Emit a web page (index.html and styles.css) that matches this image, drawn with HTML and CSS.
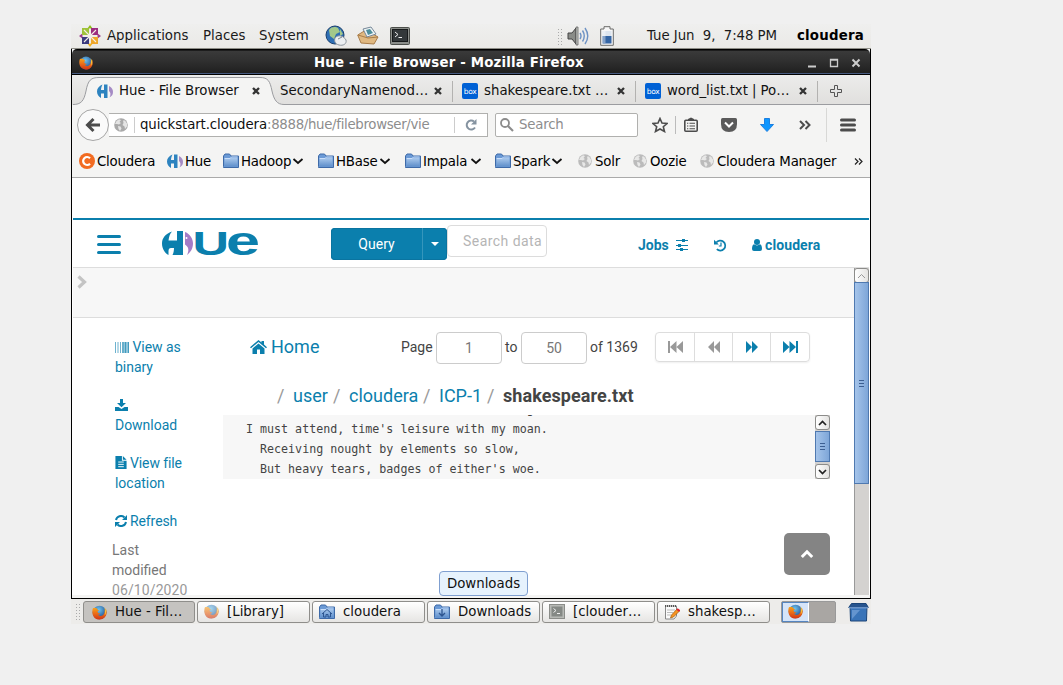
FILE: index.html
```html
<!DOCTYPE html>
<html lang="en">
<head>
<meta charset="utf-8">
<title>Hue - File Browser</title>
<link rel="stylesheet" href="styles.css">
</head>
<body>
<svg class="defs" width="0" height="0">
  <defs>
    <linearGradient id="gf" x1="0" y1="0" x2="0" y2="1"><stop offset="0" stop-color="#a9c8ec"/><stop offset="1" stop-color="#5f8fcb"/></linearGradient>
    <radialGradient id="gb" cx=".45" cy=".3" r=".7"><stop offset="0" stop-color="#6fc4ee"/><stop offset="1" stop-color="#173f86"/></radialGradient>
    <linearGradient id="go" x1="0" y1="0" x2="0" y2="1"><stop offset="0" stop-color="#f5a21c"/><stop offset=".5" stop-color="#ea6a18"/><stop offset="1" stop-color="#cf3417"/></linearGradient>
    <symbol id="firefox" viewBox="0 0 16 16">
      <circle cx="8" cy="8" r="7.3" fill="url(#gb)"/>
      <path d="M1 3.500C0 6 0 10 2 12.700C4 15.500 8.500 16.600 12 14.500C16 12 16.700 7 14.500 3.500C14.300 5 14 5.500 13.500 6C13.800 8.500 12.500 11.500 9.500 11.600C8 11.600 7 11 6.500 10C7.500 10.200 8.500 9.800 8.700 9C7 9 5.800 8 6 6.600C6.500 6.300 7.200 6.500 7.400 5.800C6.500 5 5.500 4.500 5 3.500C3.500 3 2 3 1 3.500Z" fill="url(#go)"/>
      <path d="M13 2.500C15.300 5 15.500 9 13.500 11.500C14.200 8 14 5 13 2.500Z" fill="#fccf3a"/>
    </symbol>
    <symbol id="huemark" viewBox="0 0 31 24">
      <path d="M10 .5C3 3 0 7.500 0 12.500C0 18 3 22 6.500 24V20Q6.500 17 9 17H15V24H21V0H15V9.500H6.500C7 5.500 8 2.500 10 .5Z" fill="#0b7fad"/>
      <path d="M10.500 24C11.500 22 12 19.500 12 17H15V24Z" fill="#0b7fad"/>
      <path d="M23 1C28 3 31 7.500 31 12.500C31 17.500 28.500 21.500 25 24C27.500 19 26.500 16 23 13.500Z" fill="#a47cc7"/>
      <circle cx="24.500" cy="7" r="1" fill="#fff"/>
    </symbol>
    <symbol id="huefav" viewBox="0 0 16 16">
      <path d="M5.500 1.500C2 3 0 5.500 0 8.500C0 11.500 1.500 13.500 4 15V10.500H7V15H10.500V1.500H7V7H4C4.200 4.500 4.700 3 5.500 1.500Z" fill="#2d83bf"/>
      <path d="M12 3C15 4.500 16 6.500 16 9C16 11.500 15 13 12.500 14.500C14 11.500 13.700 9.500 12 8Z" fill="#a58bc5"/>
    </symbol>
    <symbol id="folder" viewBox="0 0 16 16">
      <path d="M.5 13.500V3L2 1H6.500L8 3H15.500V14.500H.5Z" fill="#6b9ad6" stroke="#3e6aa8"/>
      <path d="M1.500 13.500V6.500L3 5H14.500V13.500Z" fill="url(#gf)"/><path d="M1.500 5.500H7L8.500 4H14.500" fill="none" stroke="#c9defa"/>
    </symbol>
    <symbol id="globe" viewBox="0 0 14 14">
      <circle cx="7" cy="7" r="6.800" fill="#a9a9a9"/>
      <path d="M1 6L2.500 3L5 1.200L7 2L5.500 4L7 5L5 6.500L3 6ZM4 8L6.500 8.500L7.500 10.500L6 13L4.500 11ZM9 2.500L11 2.500L13 5.500L13 8.500L11 11L10.500 8.500L8.500 7L9.500 5Z" fill="#e4e4e4"/>
    </symbol>
    <symbol id="close" viewBox="0 0 10 10"><path d="M2 2L8 8M8 2L2 8" stroke="#333" stroke-width="2.300"/></symbol>
    <symbol id="chev" viewBox="0 0 12 12"><path d="M1.500 4L6 8L10.500 4" fill="none" stroke="#111" stroke-width="1.800"/></symbol>
    <symbol id="boxfav" viewBox="0 0 16 16"><rect width="16" height="16" rx="2" fill="#0061d5"/><text x="8" y="10.800" text-anchor="middle" font-family="DejaVu Sans" font-size="7.500" letter-spacing="-.4" fill="#fff">box</text></symbol>
  </defs>
</svg>
<main class="desktop">
  <header class="panel">
    <svg width="22" height="22" viewBox="0 0 22 22">
      <path d="M22 11L18 14V8ZM0 11L4 8V14Z" fill="#9b3f8c"/><path d="M11 0L14 4H8Z" fill="#8fbc1c"/><path d="M11 22L8 18H14Z" fill="#f0b020"/>
      <path d="M3 3H10V10H3Z" fill="#9fc23a"/><path d="M12 3H19V10H12Z" fill="#9c2d80"/><path d="M3 12H10V19H3Z" fill="#3b3a7d"/><path d="M12 12H19V19H12Z" fill="#efa72b"/>
      <path d="M5 5L17 17M17 5L5 17M11 3V19M3 11H19" stroke="#f3eee6" stroke-width="1.100"/>
    </svg>
    <span>Applications</span><span>Places</span><span>System</span>
    <svg width="22" height="22" viewBox="0 0 22 22"><circle cx="10" cy="10" r="9" fill="#2f6fb4" stroke="#193f6d"/><path d="M4 5C7 1 11 2 13 3L15 7L11 9L9 14L5 11ZM15 4L18 9L15 11Z" fill="#a3c88a"/><path d="M10 13C13 9 19 11 21 15C22 19 18 21 14 20C10 19 9 16 10 13Z" fill="#eceff1" stroke="#8b949c"/><path d="M13 14L17 12" stroke="#7d8890"/></svg>
    <svg width="22" height="22" viewBox="0 0 22 22"><path d="M.7 10L9 5L21 12L17 19L4 18Z" fill="#e0b981" stroke="#a97d4a"/><path d="M6 4L14 2L19 9L10 12Z" fill="#edf3f4" stroke="#789"/><path d="M9 5L13 4L16 8L11 10Z" fill="#4d8e9c"/><path d="M1 10L11 13L21 12" fill="none" stroke="#a97d4a"/></svg>
    <svg width="20" height="18" viewBox="0 0 20 18"><rect x=".5" y=".5" width="19" height="17" rx="1" fill="#8b8e8a" stroke="#4b4e4a"/><rect x="2.500" y="2.500" width="15" height="12" fill="#33383a" stroke="#171a1b"/><path d="M5 5L8 7.500L5 10M8.500 10.500H12" fill="none" stroke="#eee"/></svg>
    <i class="grip"></i>
    <svg width="22" height="20" viewBox="0 0 22 20"><path d="M1 7H5L9 2V18L5 13H1Z" fill="#8a8c88" stroke="#444"/><path d="M9 1H11V19H9Z" fill="#c7c9c5" stroke="#555" stroke-width=".7"/><path d="M13 7Q15 10 13 13M15.500 4.500Q19 10 15.500 15.500M18 2Q23.500 10 18 18" fill="none" stroke="#6d92c4" stroke-width="1.400"/></svg>
    <svg width="14" height="20" viewBox="0 0 14 20"><path d="M4 3V.7H10V3H13.300V19.300H.7V3Z" fill="#f7f7f7" stroke="#6a6b69"/><rect x="2.500" y="5" width="9" height="5" fill="#dce4ee"/><rect x="2.500" y="10" width="9" height="7.500" fill="#3465a4"/><rect x="2.500" y="5" width="3" height="12" fill="#fff" opacity=".4"/></svg>
    <span class="date">Tue Jun&nbsp; 9,&nbsp; 7:48 PM</span><b>cloudera</b>
  </header>

  <section class="window">
    <div class="titlebar">
      <svg width="14" height="14"><use href="#firefox"/></svg>
      <b>Hue - File Browser - Mozilla Firefox</b>
      <svg width="54" height="12" viewBox="0 0 54 12" fill="none" stroke="#ccc"><path d="M1 9.500H9" stroke-width="2"/><path d="M23.500 2.500H30.500V9.500H23.500Z M23 3H31" stroke-width="1.300"/><path d="M45.500 2.500L52.500 9.500M52.500 2.500L45.500 9.500" stroke-width="2"/></svg>
    </div>
    <div class="tabs">
      <svg class="tabshape" width="797" height="30" viewBox="0 0 797 30"><path d="M0 30V29.500C8 29.500 11 26 13 16C15 5 18 2.500 26 2.500H187C195 2.500 197 6 199 16C201 25 204 29.500 211 29.500V30Z" fill="#f4f4f3"/><path d="M0 29.500C8 29.500 11 26 13 16C15 5 18 2.500 26 2.500H187C195 2.500 197 6 199 16C201 25 204 29.500 211 29.500H797" fill="none" stroke="#9b9ca0"/></svg>
      <div class="tabrow">
        <svg width="16" height="16"><use href="#huefav"/></svg><span class="s1">Hue - File Browser</span><svg width="10" height="10"><use href="#close"/></svg>
        <span class="s2">SecondaryNamenod…</span><svg width="10" height="10"><use href="#close"/></svg><i></i>
        <svg width="16" height="16"><use href="#boxfav"/></svg><span class="s3">shakespeare.txt …</span><svg width="10" height="10"><use href="#close"/></svg><i></i>
        <svg width="16" height="16"><use href="#boxfav"/></svg><span class="s4">word_list.txt | Po…</span><svg width="10" height="10"><use href="#close"/></svg><i></i>
        <svg class="plus" width="12" height="12" viewBox="0 0 12 12"><path d="M4.500.5H7.500V4.500H11.500V7.500H7.500V11.500H4.500V7.500H.5V4.500H4.500Z" fill="#e6e6e5" stroke="#555"/></svg>
      </div>
    </div>
    <div class="nav">
      <div class="back"><svg width="16" height="16" viewBox="0 0 16 16"><path d="M8.500 2L2.500 8L8.500 14M3 8H15" fill="none" stroke="#4b4b4b" stroke-width="3"/></svg></div>
      <div class="url">
        <svg width="14" height="14"><use href="#globe"/></svg><i></i><span>quickstart.cloudera<em>:8888/hue/filebrowser/vie</em></span><i></i>
        <svg width="12" height="12" viewBox="0 0 12 12"><path d="M10 8.500A4.500 4.500 0 1 1 9 2.500" fill="none" stroke="#8593a0" stroke-width="2"/><path d="M11.500 0V5.500H6Z" fill="#8593a0"/></svg>
      </div>
      <div class="find"><svg width="14" height="14" viewBox="0 0 14 14"><circle cx="5" cy="5" r="4" fill="none" stroke="#8c8c8c" stroke-width="1.800"/><path d="M8 8L13 13" stroke="#8c8c8c" stroke-width="2.200"/></svg><span>Search</span></div>
      <div class="tools">
        <svg width="16" height="16" viewBox="0 0 16 16"><path d="M8 1.500L10 6L15 6.500L11.300 9.700L12.500 14.500L8 12L3.500 14.500L4.700 9.700L1 6.500L6 6Z" fill="none" stroke="#4c4c4c" stroke-width="1.600"/></svg>
        <i></i>
        <svg width="14" height="16" viewBox="0 0 14 16"><rect x=".8" y="3.300" width="12.400" height="10.900" rx="1" fill="none" stroke="#4c4c4c" stroke-width="1.600"/><path d="M4 3.500V2L7 .5L10 2V3.500Z" fill="#4c4c4c"/><path d="M3 6.300H4.300M5.500 6.300H11M3 9H4.300M5.500 9H11M3 11.700H4.300M5.500 11.700H11" stroke="#4c4c4c" stroke-width="1.100"/></svg>
        <svg width="16" height="14" viewBox="0 0 16 14"><path d="M1.500 0H14.500Q16 0 16 1.500V6Q16 14 8 14Q0 14 0 6V1.500Q0 0 1.500 0Z" fill="#5a5a5a"/><path d="M4 4.500L8 8.500L12 4.500" fill="none" stroke="#fff" stroke-width="2"/></svg>
        <svg width="14" height="14" viewBox="0 0 14 14"><path d="M4.500.5H9.500V6.500H13.500L7 13.500L.5 6.500H4.500Z" fill="#0d96ff" stroke="#1b7fe0"/></svg>
        <svg width="12" height="10" viewBox="0 0 12 10"><path d="M1 1L5 5L1 9M6.500 1L10.500 5L6.500 9" fill="none" stroke="#4c4c4c" stroke-width="2"/></svg>
        <i class="tall"></i>
        <svg width="16" height="14" viewBox="0 0 16 14"><path d="M1.500 2H14.500M1.500 7H14.500M1.500 12H14.500" stroke="#4c4c4c" stroke-width="3" stroke-linecap="round"/></svg>
      </div>
    </div>
    <div class="marks">
      <svg width="16" height="16" viewBox="0 0 16 16"><circle cx="8" cy="8" r="8" fill="#f26b21"/><path d="M11 5.200A4 4 0 1 0 11 10.800" fill="none" stroke="#fff" stroke-width="2.200"/></svg><span>Cloudera</span>
      <svg width="16" height="16"><use href="#huefav"/></svg><span>Hue</span>
      <svg width="16" height="16"><use href="#folder"/></svg><span>Hadoop</span><svg width="12" height="12"><use href="#chev"/></svg>
      <svg width="16" height="16"><use href="#folder"/></svg><span>HBase</span><svg width="12" height="12"><use href="#chev"/></svg>
      <svg width="16" height="16"><use href="#folder"/></svg><span>Impala</span><svg width="12" height="12"><use href="#chev"/></svg>
      <svg width="16" height="16"><use href="#folder"/></svg><span>Spark</span><svg width="12" height="12"><use href="#chev"/></svg>
      <svg width="14" height="14" opacity=".75"><use href="#globe"/></svg><span>Solr</span>
      <svg width="14" height="14" opacity=".75"><use href="#globe"/></svg><span>Oozie</span>
      <svg width="14" height="14" opacity=".75"><use href="#globe"/></svg><span class="cm">Cloudera Manager</span>
      <svg width="9" height="7" viewBox="0 0 9 7"><path d="M1 .5L4 3.500L1 6.500M5 .5L8 3.500L5 6.500" fill="none" stroke="#222" stroke-width="1.200"/></svg>
    </div>

    <div class="page">
      <div class="hue">
        <svg width="24" height="20" viewBox="0 0 24 20"><path d="M1.500 1.500H22.500M1.500 9.500H22.500M1.500 17.500H22.500" stroke="#0b7fad" stroke-width="3" stroke-linecap="round"/></svg>
        <svg class="logo" width="98" height="26" viewBox="0 0 98 26"><use href="#huemark" width="31" height="24" y="1"/><g fill="#0b7fad" font-family="Liberation Sans" font-weight="bold"><text x="30.500" y="24.600" font-size="32.500" textLength="36.500" lengthAdjust="spacingAndGlyphs">U</text><text x="64" y="24.500" font-size="40.500" textLength="34" lengthAdjust="spacingAndGlyphs">e</text></g></svg>
        <div class="query"><span>Query</span><i><svg width="8" height="4" viewBox="0 0 8 4"><path d="M0 0H8L4 4Z" fill="#fff"/></svg></i></div>
        <div class="sdata">Search data</div>
        <b>Jobs</b>
        <svg width="13" height="12" viewBox="0 0 13 12"><path d="M0 1.500H12M0 6.500H12M0 10.500H12" stroke="#0b7fad"/><path d="M6 0H9V3H6ZM2 5H5V8H2ZM4 9H7V12H4Z" fill="#0b7fad"/></svg>
        <svg width="13" height="13" viewBox="0 0 13 13"><path d="M2.300 3.500A5 5 0 1 1 2.800 10.200" fill="none" stroke="#0b7fad" stroke-width="1.700"/><path d="M0 .8V5.500H4.800Z" fill="#0b7fad"/><path d="M7 3.500V7H4.800" fill="none" stroke="#0b7fad" stroke-width="1.200"/></svg>
        <svg width="10" height="12" viewBox="0 0 10 12"><circle cx="5" cy="3" r="3" fill="#0b7fad"/><path d="M2 5.300Q5 7.500 8 5.300Q10 6 10 10Q10 12 8 12H2Q0 12 0 10Q0 6 2 5.300Z" fill="#0b7fad"/></svg>
        <b class="who">cloudera</b>
      </div>
      <div class="body">
        <div class="view">
          <div class="strip"><svg width="10" height="14" viewBox="0 0 10 14"><path d="M1.500 1.500L7.500 7L1.500 12.500" fill="none" stroke="#c4c4c4" stroke-width="3.200"/></svg></div>
          <div class="cols">
            <nav class="side">
              <a><svg width="14" height="11" viewBox="0 0 14 11"><path d="M7 0h7v11h-7z" fill="#0b7fad" opacity=".45"/><path d="M.5 0V11M3 0V11M5.500 0V11M8 0V11M10.500 0V11M13.500 0V11" stroke="#0b7fad" stroke-width=".8" opacity=".75"/></svg> View as<br>binary</a>
              <a><svg width="13" height="12" viewBox="0 0 13 12"><path d="M5 0H8V4H11L6.500 8.300L2 4H5Z M0 8H3.500L6.500 10L9.500 8H13V12H0Z" fill="#0b7fad"/></svg><br>Download</a>
              <a><svg width="12" height="13" viewBox="0 0 12 14"><path d="M0 0H7V5H12V14H0ZM8 0L12 4H8Z" fill="#0b7fad"/><path d="M3 6.500H9M3 9H9M3 11.500H9" stroke="#fff"/></svg><span class="n">View file</span><br>location</a>
              <a><svg width="12" height="12" viewBox="0 0 12 12"><path d="M1 5A5 5 0 0 1 9.500 2.500M11 7A5 5 0 0 1 2.500 9.500" fill="none" stroke="#0b7fad" stroke-width="2"/><path d="M12 0V5H7ZM0 12V7H5Z" fill="#0b7fad"/></svg><span class="n">Refresh</span></a>
              <p>Last<br>modified<br><em>06/10/2020</em></p>
            </nav>
            <section class="file">
              <div class="pager">
                <svg width="17" height="14" viewBox="0 0 17 14"><path d="M0 7.200L8.500 0L11.500 2.500V1H14V4.600L17 7.200L16 8.300L8.500 2L1 8.300Z M2.500 8.500L8.500 3.400L14.500 8.500V14H10V9.500H7V14H2.500Z" fill="#0b7fad"/></svg>
                <a>Home</a><span>Page</span><div class="box">1</div><span>to</span><div class="box">50</div><span>of 1369</span>
                <div class="btns">
                  <i><svg width="15" height="12" viewBox="0 0 15 12"><path d="M0 0H2V12H0ZM8.500 0V12L2 6ZM15 0V12L8.500 6Z" fill="#999"/></svg></i>
                  <i><svg width="12" height="12" viewBox="0 0 12 12"><path d="M6 0V12L0 6ZM12 0V12L6 6Z" fill="#999"/></svg></i>
                  <i><svg width="12" height="12" viewBox="0 0 12 12"><path d="M0 0V12L6 6ZM6 0V12L12 6Z" fill="#0b7fad"/></svg></i>
                  <i><svg width="15" height="12" viewBox="0 0 15 12"><path d="M0 0V12L6.500 6ZM6.500 0V12L13 6ZM13 0H15V12H13Z" fill="#0b7fad"/></svg></i>
                </div>
              </div>
              <div class="crumbs"><u>/</u><a>user</a><u>/</u><a>cloudera</a><u>/</u><a>ICP-1</a><u>/</u><b>shakespeare.txt</b></div>
              <div class="text">
<pre>But that so much of earth and water wrought,
I must attend, time's leisure with my moan.
  Receiving nought by elements so slow,
  But heavy tears, badges of either's woe.</pre>
                <div class="sb inner"><i class="btn"><svg width="9" height="6" viewBox="0 0 9 6"><path d="M1 5L4.500 1.500L8 5" fill="none" stroke="#222" stroke-width="1.700"/></svg></i><i class="thumb"><s></s></i><i class="btn low"><svg width="9" height="6" viewBox="0 0 9 6"><path d="M1 1L4.500 4.500L8 1" fill="none" stroke="#222" stroke-width="1.700"/></svg></i></div>
              </div>
              <div class="top"><svg width="14" height="10" viewBox="0 0 14 10"><path d="M1.800 8L7 2.800L12.200 8" fill="none" stroke="#fff" stroke-width="3"/></svg></div>
            </section>
          </div>
        </div>
        <div class="sb outer"><i class="btn"><svg width="9" height="6" viewBox="0 0 9 6"><path d="M1 5L4.500 1.500L8 5" fill="none" stroke="#999"/></svg></i><i class="thumb"><s></s></i></div>
      </div>
    </div>
  </section>

  <footer class="taskbar">
    <i class="grip"></i>
    <div class="task on"><svg width="15" height="15"><use href="#firefox"/></svg><span>Hue - Fil…</span></div>
    <div class="task"><svg width="15" height="15" opacity=".6"><use href="#firefox"/></svg><span>[Library]</span></div>
    <div class="task"><svg width="16" height="16"><use href="#folder"/><path d="M3 10L8 5.500L13 10M4.500 9V13H7V10.500H9V13H11.500V9" fill="none" stroke="#2d5590"/></svg><span>cloudera</span></div>
    <div class="task"><svg width="16" height="16"><use href="#folder"/><path d="M8 5V12M5 9L8 12L11 9" fill="none" stroke="#2d5590" stroke-width="1.300"/></svg><span>Downloads</span><div class="tip">Downloads</div></div>
    <div class="task"><svg width="16" height="15" viewBox="0 0 16 15"><rect x=".5" y=".5" width="15" height="14" fill="#b8bab6" stroke="#8b8d89"/><rect x="2.500" y="2.500" width="11" height="10" fill="#858985"/><path d="M4.500 4.500L7 6.500L4.500 8.500M8 9.500H11" fill="none" stroke="#eee"/></svg><span>[clouder…</span></div>
    <div class="task"><svg width="16" height="16" viewBox="0 0 16 16"><path d="M1.500 2H12.500V12L10 15H1.500Z" fill="#fafafa" stroke="#888"/><path d="M1 2H13" stroke="#555" stroke-width="2" stroke-dasharray="1 1"/><path d="M3 6H11M3 8.500H9M3 11H7" stroke="#bbb"/><path d="M6.500 14L7.500 11L13 5L15.500 7L9.500 13Z" fill="#f79321" stroke="#9c5a10" stroke-width=".7"/><path d="M13 5L15.500 7" stroke="#d23" stroke-width="2"/></svg><span>shakesp…</span></div>
    <div class="spaces"><i><svg width="15" height="15"><use href="#firefox"/></svg></i></div>
    <svg width="21" height="20" viewBox="0 0 21 20"><path d="M2 4L2.500 19H18.500L19 4Z" fill="#3a74b8" stroke="#1c4578"/><path d="M3.500 1.500H18L20.300 5.500H.7Z" fill="#27548e" stroke="#1c4578"/><path d="M1 5.800H20" stroke="#8fb6e6"/><path d="M4 8V17L12 8Z" fill="#8fb6e6" opacity=".5"/></svg>
  </footer>
</main>
</body>
</html>
```
FILE: styles.css
```css
* { box-sizing: border-box; }
body { margin: 0; padding: 24px 0 0 71px; height: 685px; overflow: hidden; background: #f0f0f0; font: 13.333px/16px "DejaVu Sans", sans-serif; color: #111; white-space: nowrap; }
svg { display: block; flex: none; }
i, em { font-style: normal; }
.defs { position: absolute; }
.desktop { width: 800px; height: 600px; display: flex; flex-direction: column; background: #edecea; }

.panel { height: 25px; display: grid; grid-template-columns: 28px 96px 56px 66px 32px 33px 167px 10px 33px 47px 150px 74px; padding-left: 8px; align-items: center; border-bottom: 1px solid #8d8d86; background: linear-gradient(#efefee, #eae9e6); }
.panel > span, .panel > b { color: #1a1a1a; }
.panel > b { letter-spacing: .2px; color: #000; }
.panel .date { letter-spacing: -.06px; }
.grip { width: 5px; height: 17px; background: radial-gradient(circle, #aaa 30%, transparent 40%) 0 0 / 3px 3px; }

.window { height: 550px; border: 1px solid #000; border-top: 0; background: #f4f4f3; display: flex; flex-direction: column; }
.titlebar { height: 26px; flex: none; display: grid; grid-template-columns: 235px 493px 60px; padding-left: 7px; align-items: center; background: linear-gradient(#000 1px, #3a3a3a 2px, #2f2f2f 50%, #202020 94%); border-bottom: 1px solid #000; box-shadow: inset 0 -1px #465a80; border-radius: 5px 5px 0 0; color: #fff; }
.titlebar > svg { margin-top: 2px; }
.titlebar b { letter-spacing: .18px; margin-top: 2px; }

.tabs { height: 30px; flex: none; display: grid; padding-left: 1px; background: linear-gradient(#ececeb, #e0dfdd); }
.tabshape, .tabrow { grid-area: 1 / 1; }
.tabrow { display: grid; grid-template-columns: 22px 132px 29px 153px 19px 10px 22px 132px 19px 10px 22px 131px 19px 13px 40px; padding: 2px 0 0 24px; align-items: center; z-index: 1; }
.tabrow i { width: 1px; height: 21px; background: #b3b2b0; }
.s1 { letter-spacing: -.04px; }
.s4 { letter-spacing: -.06px; }

.nav { height: 39px; flex: none; display: flex; align-items: center; padding-left: 5px; }
.back { width: 32px; height: 32px; border: 1px solid #a6a6a6; border-radius: 50%; background: #fafafa; display: flex; align-items: center; justify-content: center; z-index: 1; }
.url { width: 379px; height: 24px; border: 1px solid #b0b0ae; border-left: 0; background: #fff; display: grid; grid-template-columns: 20px 6px 314px 11px 20px; align-items: center; padding-left: 5px; }
.url i { width: 1px; height: 16px; background: #ccc; }
.url span { margin-top: 1px; letter-spacing: -.1px; }
.url em { color: #8d8d8d; letter-spacing: -.32px; }
.find { width: 143px; height: 24px; margin-left: 7px; border: 1px solid #b0b0ae; border-radius: 2px; background: #fff; display: flex; align-items: center; gap: 5px; padding-left: 4px; color: #8d8d8d; }
.find span { margin-top: 1px; letter-spacing: -.2px; }
.tools { display: grid; grid-template-columns: 23px 9px 37px 39px 39px 27px 14px 20px; align-items: center; padding-left: 14px; }
.tools i { width: 1px; height: 18px; background: #bbb; }
.tools .tall { height: 34px; background: #d8d8d6; }

.marks { height: 34px; flex: none; display: grid; grid-template-columns: 18px 70px 18px 38px 18px 51px 26px 18px 43px 26px 18px 47px 25px 18px 38px 27px 17px 38px 17px 50px 17px 137px 14px; align-items: center; padding: 1px 0 0 7px; border-bottom: 1px solid #aaa; color: #000; letter-spacing: -.2px; }
.marks span { margin-top: 1px; }
.marks .cm { letter-spacing: -.2px; }

.page { flex: none; height: 417px; padding: 40px 1px 0; background: #fff; font-family: Roboto, sans-serif; font-size: 14px; line-height: 20px; color: #444; display: flex; flex-direction: column; }
.hue { height: 50px; flex: none; display: grid; grid-template-columns: 65px 169px 116px 191px 38px 38px 38px 13px 60px; border-top: 2px solid #0b7fad; border-bottom: 1px solid #ddd; padding: 0 0 0 24px; align-items: center; color: #0b7fad; }
.hue > svg, .hue > b { margin-top: 3px; }
.hue > .logo { margin-top: -1px; overflow: visible; }
.who { letter-spacing: .1px; }
.query { height: 32px; display: flex; background: #0b7fad; border-radius: 4px; color: #fff; line-height: 32px; box-shadow: inset 0 0 0 1px #0a74a0; }
.query span { width: 91px; text-align: center; }
.query i { width: 25px; border-left: 1px solid #3596bc; display: flex; align-items: center; justify-content: center; }
.sdata { width: 100px; height: 32px; margin-top: -5px; border: 1px solid #dcdcdc; border-radius: 4px; padding-left: 15px; line-height: 31px; color: #b5b5b5; letter-spacing: .45px; overflow: hidden; }
.body { height: 327px; display: flex; }
.view { width: 781px; overflow: hidden; }
.strip { height: 50px; background: #f7f7f7; border-bottom: 1px solid #ddd; padding: 7px 0 0 4px; }
.cols { display: flex; height: 277px; }
.side { width: 150px; padding: 19px 0 0 42px; }
.side a { display: block; margin-bottom: 18px; color: #0b7fad; letter-spacing: -.03px; }
.side svg { display: inline-block; vertical-align: -1px; }
.side .n { margin-left: 3px; letter-spacing: -.1px; }
.side p { margin: -9px 0 0 -3px; color: #777; }
.side em { color: #999; letter-spacing: .1px; }
.file { width: 607px; padding-top: 14px; }
.pager { height: 32px; display: grid; grid-template-columns: 21px 130px 35px 69px 16px 69px 65px 155px; padding-left: 27px; align-items: center; }
.pager > span { margin-top: -2px; }
.pager > svg { margin-top: -3px; }
.pager > a { font-size: 18px; color: #0b7fad; margin-top: -3px; }
.box { width: 66px; height: 32px; border: 1px solid #ccc; border-radius: 4px; line-height: 31px; text-align: center; color: #777; }
.btns { height: 30px; margin-top: -2px; border: 1px solid #ddd; border-radius: 4px; display: grid; grid-template-columns: 39px 38px 38px 38px; box-shadow: 0 1px 2px #0001; }
.btns i { display: flex; align-items: center; justify-content: center; border-right: 1px solid #ddd; }
.btns i:last-child { border: 0; }
.crumbs { display: grid; grid-template-columns: 16px 40px 16px 74px 16px 48px 16px 140px; padding: 22px 0 0 54px; font-size: 18px; color: #0b7fad; height: 51px; }
.crumbs u { text-decoration: none; color: #999; }
.crumbs b { color: #444; letter-spacing: .07px; }
.text { height: 64px; display: flex; background: #f7f7f7; overflow: hidden; }
pre { margin: -16px 0 0; padding-left: 23px; width: 592px; font: 11.667px/20px "DejaVu Sans Mono", monospace; color: #444; }
.sb { width: 15px; display: flex; flex-direction: column; background: #d4d2d0; }
.sb .btn { width: 15px; height: 15px; flex: none; border: 1px solid #8c8c8a; border-radius: 3px; background: linear-gradient(90deg, #fff, #e4e3e1); display: flex; align-items: center; justify-content: center; }
.thumb { display: flex; align-items: center; justify-content: center; border: 1px solid #4f79b0; background: linear-gradient(90deg, #a5c4ea, #7ea6d8); }
.thumb s { width: 5px; height: 7px; background: repeating-linear-gradient(#3c5f92 0 1px, transparent 1px 3px); }
.inner .thumb { height: 31px; margin-top: 1px; }
.inner .low { margin-top: 2px; }
.outer { border-left: 1px solid #999; }
.outer .btn, .outer .thumb { margin-left: -1px; width: 15px; }
.outer .thumb { height: 202px; margin-top: -1px; }
.top { width: 46px; height: 42px; margin: 54px 0 0 561px; border-radius: 5px; background: #848484; display: flex; align-items: center; justify-content: center; }

.taskbar { height: 25px; display: grid; grid-template-columns: 8px 114px 115px 115px 115px 115px 124px 67px 23px; padding-left: 4px; align-items: center; }
.task { position: relative; width: 113px; height: 22px; border: 1px solid #8f8e8b; border-radius: 3px; background: linear-gradient(#fff, #e6e5e3); display: flex; align-items: center; gap: 8px; padding-left: 6px; }
.task svg + span { min-width: 0; }
.task.on { width: 112px; background: #c5c3c0; padding: 1px 0 0 8px; }
.tip { position: absolute; left: 11px; top: -31px; width: 89px; height: 25px; border: 1px solid #7f9fd0; border-radius: 4px; background: #e6f2fd; line-height: 23px; text-align: center; color: #111; }
.spaces { width: 55px; height: 22px; background: #a9a6a3; border: 1px solid #999; border-radius: 2px; }
.spaces i { width: 27px; height: 20px; display: flex; align-items: center; justify-content: center; background: #d5e4f8; border: 1px solid #5585c0; border-right-color: #fff; }
```
